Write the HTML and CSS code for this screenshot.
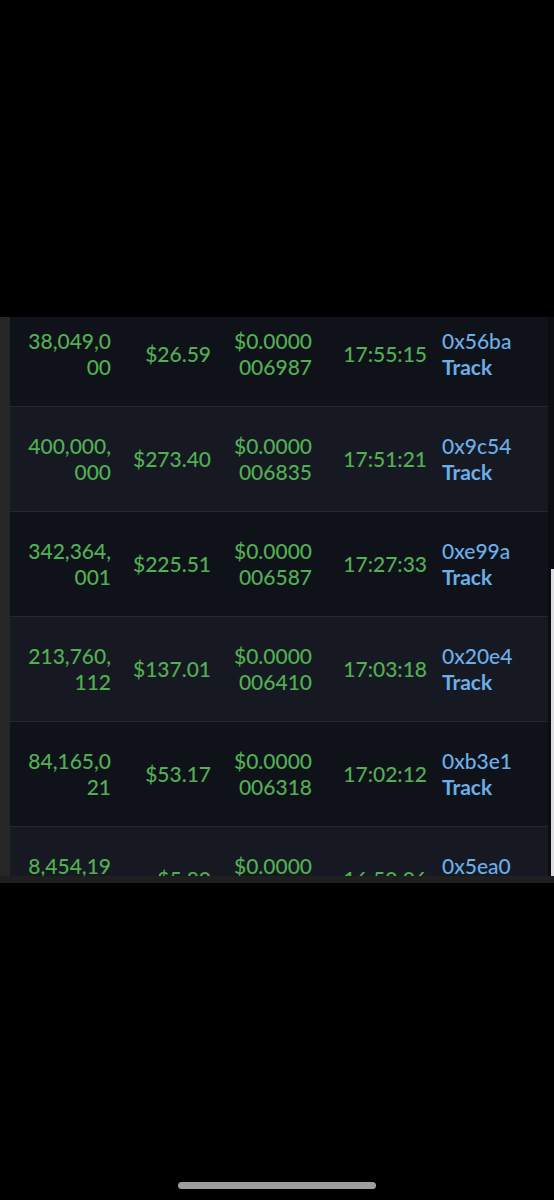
FILE: index.html
```html
<!DOCTYPE html>
<html lang="en">
<head>
  <meta charset="UTF-8" />
  <meta name="viewport" content="width=device-width, initial-scale=1.0" />
  <title>Trades</title>
  <link rel="stylesheet" href="styles.css">
</head>
<body>
  <div class="screen">
    <div class="frame">
      <div class="edge"></div>
      <div class="table-wrap">
        <div class="rows">
          <div class="row">
            <div class="cell amount">38,049,000</div>
            <div class="cell usd">$26.59</div>
            <div class="cell price">$0.0000006987</div>
            <div class="cell time">17:55:15</div>
            <div class="cell maker"><a class="addr">0x56ba</a><a class="track">Track</a></div>
          </div>
          <div class="row">
            <div class="cell amount">400,000,000</div>
            <div class="cell usd">$273.40</div>
            <div class="cell price">$0.0000006835</div>
            <div class="cell time">17:51:21</div>
            <div class="cell maker"><a class="addr">0x9c54</a><a class="track">Track</a></div>
          </div>
          <div class="row">
            <div class="cell amount">342,364,001</div>
            <div class="cell usd">$225.51</div>
            <div class="cell price">$0.0000006587</div>
            <div class="cell time">17:27:33</div>
            <div class="cell maker"><a class="addr">0xe99a</a><a class="track">Track</a></div>
          </div>
          <div class="row">
            <div class="cell amount">213,760,112</div>
            <div class="cell usd">$137.01</div>
            <div class="cell price">$0.0000006410</div>
            <div class="cell time">17:03:18</div>
            <div class="cell maker"><a class="addr">0x20e4</a><a class="track">Track</a></div>
          </div>
          <div class="row">
            <div class="cell amount">84,165,021</div>
            <div class="cell usd">$53.17</div>
            <div class="cell price">$0.0000006318</div>
            <div class="cell time">17:02:12</div>
            <div class="cell maker"><a class="addr">0xb3e1</a><a class="track">Track</a></div>
          </div>
          <div class="row">
            <div class="cell amount">8,454,194</div>
            <div class="cell usd">$5.80</div>
            <div class="cell price">$0.0000006302</div>
            <div class="cell time">16:50:06</div>
            <div class="cell maker"><a class="addr">0x5ea0</a><a class="track">Track</a></div>
          </div>
        </div>
      </div>
      <div class="scroll">
        <div class="thumb"></div>
      </div>
    </div>
    <div class="band"></div>
    <div class="home-bar"></div>
  </div>
</body>
</html>
```

FILE: styles.css
```css
body {
  margin: 0;
  background: #000;
  font-family: Lato, "Open Sans", sans-serif;
}
.screen {
  width: 554px;
  height: 1200px;
  padding-top: 317px;
  box-sizing: border-box;
}
.frame {
  display: flex;
  height: 559px;
}
.edge {
  width: 10px;
  background: #262626;
}
.table-wrap {
  flex: 1;
  overflow: hidden;
  background: #11131b;
}
.rows {
  margin-top: -15px;
}
.row {
  display: grid;
  grid-template-columns: 84px 100px 101px 115px 1fr;
  align-items: center;
  height: 104px;
  padding-left: 17px;
  border-bottom: 1px solid #252731;
  background: #10121a;
  font-size: 21px;
  font-weight: 500;
  line-height: 26px;
  color: #51b052;
}
.row:nth-child(even) {
  background: #171922;
}
.cell {
  text-align: right;
}
.amount, .price {
  word-break: break-all;
}
.price {
  padding-left: 17px;
}
.maker {
  text-align: left;
  padding-left: 15px;
}
.addr, .track {
  display: block;
  color: #6aafea;
}
.track {
  font-weight: bold;
}
.scroll {
  width: 6px;
  display: flex;
  flex-direction: column;
  align-items: flex-end;
  background: #0c0d12;
}
.thumb {
  width: 3px;
  margin-top: 252px;
  flex: 1;
  background: #dcdcdc;
}
.band {
  height: 7px;
  background: #1f1f1f;
}
.home-bar {
  width: 198px;
  height: 7px;
  margin: 299px auto 0;
  border-radius: 4px;
  background: #9e9e9e;
}
```
